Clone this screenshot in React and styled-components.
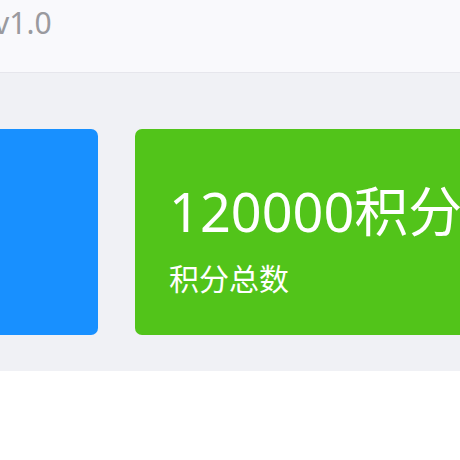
import React from "react";
import styled, { createGlobalStyle } from "styled-components";

const Global = createGlobalStyle`
  html, body { margin: 0; padding: 0; background: #ffffff; overflow: hidden; }
  body { font-family: "Noto Sans", "Noto Sans CJK SC", sans-serif; }
`;

const Header = styled.header`
  height: 73px;
  box-sizing: border-box;
  background: #f9f9fc;
  border-bottom: 1px solid #e6e6ec;
  padding-top: 8px;
  overflow: hidden;
`;

const Version = styled.span`
  display: block;
  margin-left: -6px;
  font-size: 30px;
  line-height: 1;
  color: #9a9a9f;
`;

const Content = styled.main`
  background: #f0f1f5;
  padding: 56px 0 36px;
  overflow: hidden;
`;

const CardRow = styled.div`
  display: flex;
  gap: 37px;
  margin-left: -262px;
`;

const Card = styled.div`
  flex: 0 0 360px;
  height: 206px;
  box-sizing: border-box;
  border-radius: 7px;
  background: ${(p) => p.$color};
  color: #ffffff;
  padding: 55px 0 0 34px;
  display: flex;
  flex-direction: column;
  gap: 24px;
  white-space: nowrap;
`;

const Value = styled.div`
  font-family: "Noto Sans", "Noto Sans CJK SC", sans-serif;
  font-size: 54px;
  line-height: 1;
`;

const Label = styled.div`
  font-family: "Noto Sans CJK SC", sans-serif;
  font-size: 30px;
  line-height: 1;
`;

export default function App() {
  return (
    <>
      <Global />
      <Header>
        <Version>v1.0</Version>
      </Header>
      <Content>
        <CardRow>
          <Card $color="#1890ff" />
          <Card $color="#52c41a">
            <Value>120000积分</Value>
            <Label>积分总数</Label>
          </Card>
        </CardRow>
      </Content>
    </>
  );
}
